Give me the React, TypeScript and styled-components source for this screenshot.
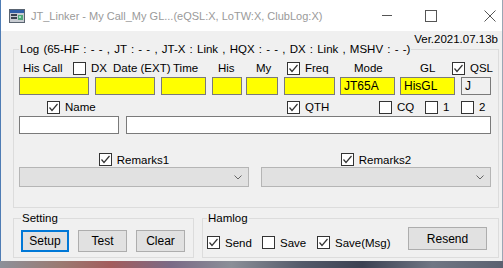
import styled, { createGlobalStyle } from 'styled-components'

const GlobalStyle = createGlobalStyle`
  html, body {
    margin: 0;
    padding: 0;
  }
  body {
    background: #4a4f5c;
    font-family: "Liberation Sans", Arial, sans-serif;
    font-size: 11.5px;
    color: #000;
    overflow: hidden;
  }
`

const Window = styled.div`
  width: 503px;
  height: 268px;
  display: flex;
  flex-direction: column;
`

const Frame = styled.div`
  display: flex;
  flex-direction: column;
  border-left: 1px solid #4f7cb4;
  border-right: 1px solid #9aa6b4;
`

const TitleBar = styled.div`
  height: 31px;
  background: #fff;
  display: flex;
  align-items: center;
  padding-left: 8px;
`

const TitleText = styled.div`
  margin-left: 6px;
  color: #9a9a9a;
  font-size: 11px;
  flex: 1;
  white-space: nowrap;
`

const CtrlBtn = styled.div<{ $w: number; $pr?: number }>`
  width: ${(p) => p.$w}px;
  height: 31px;
  display: flex;
  align-items: center;
  justify-content: ${(p) => (p.$pr ? 'flex-end' : 'center')};
  padding-right: ${(p) => p.$pr || 0}px;
  box-sizing: border-box;
`

const Body = styled.div`
  background: #f0f0f0;
  height: 230px;
  padding: 0 3px 0 12px;
  box-sizing: border-box;
  display: flex;
  flex-direction: column;
`

const Version = styled.div`
  margin-top: 1px;
  height: 14px;
  line-height: 14px;
  text-align: right;
  padding-right: 1px;
`

const Group = styled.fieldset<{ $w?: number }>`
  margin: 0;
  min-width: 0;
  border: 1px solid #dcdcdc;
  box-sizing: border-box;
  ${(p) => (p.$w ? `width: ${p.$w}px;` : '')}
`

const LogGroup = styled(Group)`
  margin-top: -4px;
  padding: 0 7px 20px 5px;
`

const Legend = styled.legend<{ $ws?: number }>`
  padding: 0 1px;
  line-height: 14px;
  white-space: nowrap;
  word-spacing: ${(p) => p.$ws || 0}px;
`

const LabelRow = styled.div<{ $pl: number; $mt: number }>`
  display: flex;
  align-items: center;
  height: 14px;
  margin-top: ${(p) => p.$mt}px;
  padding-left: ${(p) => p.$pl}px;
  white-space: nowrap;
`

const Slot = styled.div<{ $w?: number }>`
  ${(p) => (p.$w ? `width: ${p.$w}px; flex: none;` : 'flex: 1;')}
  display: flex;
  align-items: center;
`

const InputGrid = styled.div`
  display: grid;
  grid-template-columns: 76px 66px 51px 34px 38px 56px 60px 61px 30px;
  margin-top: 2px;
  height: 18px;
`

const TextBox = styled.div<{ $w: number; $bg?: string }>`
  width: ${(p) => p.$w}px;
  height: 18px;
  box-sizing: border-box;
  border: 1px solid #7a7a7a;
  background: ${(p) => p.$bg || '#fff'};
  font-size: 12px;
  line-height: 16px;
  padding-left: 3px;
  white-space: nowrap;
  overflow: hidden;
`

const WideRow = styled.div`
  display: flex;
  gap: 7px;
  margin-top: 2px;
`

const RemarksRow = styled.div`
  display: flex;
  gap: 12px;
  margin-top: 19px;
`

const RemarksCol = styled.div`
  width: 230px;
  display: flex;
  flex-direction: column;
  align-items: center;
  gap: 1px;
`

const Combo = styled.div`
  width: 100%;
  height: 20px;
  box-sizing: border-box;
  border: 1px solid #b5b5b5;
  background: #e1e1e1;
  display: flex;
  align-items: center;
  justify-content: flex-end;
  padding-right: 6px;
`

const BottomRow = styled.div`
  display: flex;
  gap: 8px;
  margin-top: 3px;
`

const SettingGroup = styled(Group)`
  padding: 5px 0 5px 7px;
`

const HamlogGroup = styled(Group)`
  padding: 2px 0 7px 4px;
`

const ButtonRow = styled.div`
  display: flex;
  gap: 9px;
`

const Button = styled.div<{ $w: number; $h?: number; $default?: boolean }>`
  width: ${(p) => p.$w}px;
  height: ${(p) => p.$h || 22}px;
  box-sizing: border-box;
  background: #e1e1e1;
  border: ${(p) => (p.$default ? '2px solid #0078d7' : '1px solid #adadad')};
  display: flex;
  align-items: center;
  justify-content: center;
  font-size: 12px;
`

const HamlogRow = styled.div`
  display: flex;
  align-items: flex-start;
`

const HamlogChecks = styled.div`
  display: flex;
  margin-top: 9px;
`

const CheckLabel = styled.label`
  display: inline-flex;
  align-items: center;
  gap: 5px;
  white-space: nowrap;
`

const Box = styled.span`
  width: 13px;
  height: 13px;
  box-sizing: border-box;
  border: 1px solid #333;
  background: #fff;
  display: inline-flex;
  align-items: center;
  justify-content: center;
  flex: none;
`

const Desktop = styled.div`
  flex: 1;
  background: linear-gradient(
    90deg,
    #8d9099 0%,
    #9a7a72 12%,
    #a35c5c 22%,
    #7a6a86 34%,
    #8b8f98 46%,
    #545a6a 60%,
    #3c4152 72%,
    #707684 86%,
    #5b6170 100%
  );
`

function Check({ checked, label }: { checked?: boolean; label?: string }) {
  return (
    <CheckLabel>
      <Box>
        {checked && (
          <svg width="11" height="11" viewBox="0 0 11 11">
            <polyline points="1.5,5.5 4,8.5 9.5,2" fill="none" stroke="#333" strokeWidth="1.2" />
          </svg>
        )}
      </Box>
      {label && <span>{label}</span>}
    </CheckLabel>
  )
}

function AppIcon() {
  return (
    <svg width="16" height="16" viewBox="0 0 16 16">
      <rect x="0.5" y="1.5" width="15" height="13" fill="#c8ccd2" stroke="#5a6470" />
      <rect x="1" y="2" width="14" height="3" fill="#2f5fa8" />
      <rect x="2" y="6" width="6" height="2" fill="#3a4450" />
      <rect x="2" y="9" width="6" height="2" fill="#3a4450" />
      <rect x="9" y="7" width="5" height="5" fill="#4fa878" />
      <rect x="10" y="8" width="2" height="2" fill="#9fe0c0" />
    </svg>
  )
}

function Chevron() {
  return (
    <svg width="8" height="5">
      <polyline points="0.5,0.5 4,4 7.5,0.5" fill="none" stroke="#666" />
    </svg>
  )
}

export default function App() {
  return (
    <Window>
      <GlobalStyle />
      <Frame>
        <TitleBar>
          <AppIcon />
          <TitleText>JT_Linker - My Call_My GL...(eQSL:X, LoTW:X, ClubLog:X)</TitleText>
          <CtrlBtn $w={44}>
            <svg width="10" height="1">
              <rect width="10" height="1" fill="#555" />
            </svg>
          </CtrlBtn>
          <CtrlBtn $w={44}>
            <svg width="12" height="12">
              <rect x="0.5" y="0.5" width="11" height="11" fill="none" stroke="#555" />
            </svg>
          </CtrlBtn>
          <CtrlBtn $w={49} $pr={6}>
            <svg width="12" height="12">
              <path d="M0.5 0.5 L11.5 11.5 M11.5 0.5 L0.5 11.5" stroke="#555" strokeWidth="1" />
            </svg>
          </CtrlBtn>
        </TitleBar>
        <Body>
          <Version>Ver.2021.07.13b</Version>
          <LogGroup>
            <Legend $ws={1}>Log (65-HF : - - , JT : - - , JT-X : Link , HQX : - - , DX : Link , MSHV : - -)</Legend>
            <LabelRow $pl={4} $mt={5}>
              <Slot $w={50}>His Call</Slot>
              <Slot $w={40}><Check label="DX" /></Slot>
              <Slot $w={60}>Date (EXT)</Slot>
              <Slot $w={45}>Time</Slot>
              <Slot $w={38}>His</Slot>
              <Slot $w={31}>My</Slot>
              <Slot $w={67}><Check checked label="Freq" /></Slot>
              <Slot $w={66}>Mode</Slot>
              <Slot $w={32}>GL</Slot>
              <Slot><Check checked label="QSL" /></Slot>
            </LabelRow>
            <InputGrid>
              <TextBox $w={70} $bg="#ffff00" />
              <TextBox $w={60} $bg="#ffff00" />
              <TextBox $w={45} $bg="#ffff00" />
              <TextBox $w={30} $bg="#ffff00" />
              <TextBox $w={32} $bg="#ffff00" />
              <TextBox $w={51} $bg="#ffff00" />
              <TextBox $w={55} $bg="#ffff00">JT65A</TextBox>
              <TextBox $w={55} $bg="#ffff00">HisGL</TextBox>
              <TextBox $w={30} $bg="#f0f0f0">J</TextBox>
            </InputGrid>
            <LabelRow $pl={28} $mt={5}>
              <Slot $w={240}><Check checked label="Name" /></Slot>
              <Slot $w={92}><Check checked label="QTH" /></Slot>
              <Slot $w={46}><Check label="CQ" /></Slot>
              <Slot $w={36}><Check label="1" /></Slot>
              <Slot><Check label="2" /></Slot>
            </LabelRow>
            <WideRow>
              <TextBox $w={100} />
              <TextBox $w={366} />
            </WideRow>
            <RemarksRow>
              <RemarksCol>
                <Check checked label="Remarks1" />
                <Combo>
                  <Chevron />
                </Combo>
              </RemarksCol>
              <RemarksCol>
                <Check checked label="Remarks2" />
                <Combo>
                  <Chevron />
                </Combo>
              </RemarksCol>
            </RemarksRow>
          </LogGroup>
          <BottomRow>
            <SettingGroup $w={181}>
              <Legend>Setting</Legend>
              <ButtonRow>
                <Button $w={48} $default>Setup</Button>
                <Button $w={49}>Test</Button>
                <Button $w={49}>Clear</Button>
              </ButtonRow>
            </SettingGroup>
            <HamlogGroup $w={297}>
              <Legend>Hamlog</Legend>
              <HamlogRow>
                <HamlogChecks>
                  <Slot $w={55}><Check checked label="Send" /></Slot>
                  <Slot $w={55}><Check label="Save" /></Slot>
                  <Slot $w={91}><Check checked label="Save(Msg)" /></Slot>
                </HamlogChecks>
                <Button $w={79} $h={23}>Resend</Button>
              </HamlogRow>
            </HamlogGroup>
          </BottomRow>
        </Body>
      </Frame>
      <Desktop />
    </Window>
  )
}
